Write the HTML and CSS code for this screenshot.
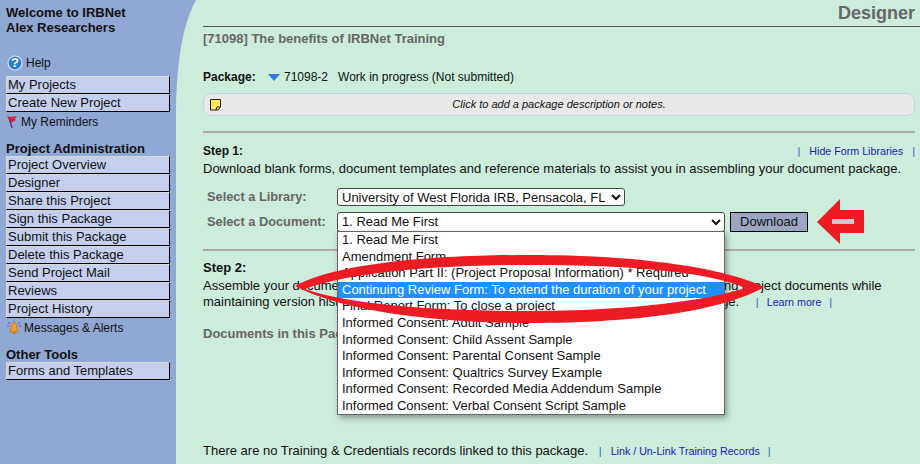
FILE: index.html
```html
<!DOCTYPE html>
<html lang="en">
<head>
<meta charset="utf-8">
<title>IRBNet Designer</title>
<link rel="stylesheet" href="styles.css">
</head>
<body>
<div class="page">
  <aside class="side">
    <div class="welcome">Welcome to IRBNet<br>Alex Researchers</div>
    <div class="help">
      <svg class="ico" width="16" height="16" viewBox="0 0 16 16"><circle cx="8" cy="8" r="7" fill="#2a7fd0" stroke="#d8e8f8" stroke-width="1.2"/><text x="8" y="12" text-anchor="middle" class="qm">?</text></svg>
      <span>Help</span>
    </div>
    <nav class="menu">
      <a>My Projects</a>
      <a>Create New Project</a>
    </nav>
    <div class="sub">
      <svg width="12" height="14" viewBox="0 0 12 14"><path d="M0 1 L4 2 L10 1 L8 3.5 L9 5 L4 8 Z" fill="#d8263c"/><path d="M2 3 L5 13" stroke="#6a2a6a" stroke-width="1.3"/></svg>
      <span>My Reminders</span>
    </div>
    <h3 class="head">Project Administration</h3>
    <nav class="menu">
      <a>Project Overview</a>
      <a>Designer</a>
      <a>Share this Project</a>
      <a>Sign this Package</a>
      <a>Submit this Package</a>
      <a>Delete this Package</a>
      <a>Send Project Mail</a>
      <a>Reviews</a>
      <a>Project History</a>
    </nav>
    <div class="sub alerts">
      <svg width="14" height="14" viewBox="0 0 14 14"><path d="M7 2 C4.6 2 4.2 4 4.2 6.5 C4.2 8.6 3.4 10 2.6 11 H11.4 C10.6 10 9.8 8.6 9.8 6.5 C9.8 4 9.4 2 7 2Z" fill="#f0a020" stroke="#b86c10" stroke-width=".6"/><rect x="5.6" y="11.2" width="2.8" height="1.8" fill="#c87818"/><path d="M1 1 L3 3 M13 1 L11 3 M0 5 H2 M12 5 H14 M7 0 V1" stroke="#6a3ac0" stroke-width=".8"/></svg>
      <span>Messages &amp; Alerts</span>
    </div>
    <h3 class="head other">Other Tools</h3>
    <nav class="menu">
      <a>Forms and Templates</a>
    </nav>
  </aside>

  <svg class="curve" width="24" height="110" viewBox="0 0 24 110"><path d="M0 0 H20 C8 22 1 55 0 110 Z" fill="#90a8d4"/></svg>

  <main class="main">
    <div class="brand">Designer</div>
    <h2 class="title">[71098] The benefits of IRBNet Training</h2>
    <div class="pkg">
      <b class="pkg-label">Package:</b>
      <svg class="tri" width="12" height="7" viewBox="0 0 12 7"><path d="M0 0 H12 L6 7 Z" fill="#3a78d8"/></svg>
      <span class="pkg-id">71098-2</span>
      <span>Work in progress (Not submitted)</span>
    </div>
    <div class="note">
      <svg class="note-ico" width="12" height="12" viewBox="0 0 12 12"><path d="M.5 .5 H10.5 V8 L8 11 H.5 Z" fill="#ffe94a" stroke="#222"/><path d="M6 11 L7 8 H10.5" fill="none" stroke="#222"/></svg>
      <i>Click to add a package description or notes.</i>
    </div>

    <section class="step one">
      <div class="step-top">
        <b>Step 1:</b>
        <div class="links"><s class="bar">|</s><a>Hide Form Libraries</a><s class="bar">|</s></div>
      </div>
      <p class="desc">Download blank forms, document templates and reference materials to assist you in assembling your document package.</p>
      <div class="field lib">
        <label>Select a Library:</label>
        <select class="sel sel-lib"><option>University of West Florida IRB, Pensacola, FL</option></select>
      </div>
      <div class="field doc">
        <label>Select a Document:</label>
        <select class="sel sel-doc"><option>1. Read Me First</option></select>
        <button class="dl">Download</button>
      </div>
    </section>

    <section class="step two">
      <b>Step 2:</b>
      <p class="desc2">Assemble your document package by creating, uploading, sharing, previewing and managing project documents while<br>maintaining version history and tracking all the changes and edits to your document package. <s class="bar lead">|</s><a class="learn">Learn more</a><s class="bar">|</s></p>
      <b class="docs">Documents in this Package:</b>
    </section>

    <div class="train">
      <span>There are no Training &amp; Credentials records linked to this package.</span>
      <s class="bar">|</s><a>Link / Un-Link Training Records</a><s class="bar">|</s>
    </div>
  </main>

  <ul class="list">
    <li>1. Read Me First</li>
    <li>Amendment Form</li>
    <li>Application Part II: (Project Proposal Information) * Required</li>
    <li class="on">Continuing Review Form: To extend the duration of your project</li>
    <li>Final Report Form: To close a project</li>
    <li>Informed Consent: Adult Sample</li>
    <li>Informed Consent: Child Assent Sample</li>
    <li>Informed Consent: Parental Consent Sample</li>
    <li>Informed Consent: Qualtrics Survey Example</li>
    <li>Informed Consent: Recorded Media Addendum Sample</li>
    <li>Informed Consent: Verbal Consent Script Sample</li>
  </ul>

  <svg class="marks" width="920" height="464" viewBox="0 0 920 464">
    <path fill-rule="evenodd" fill="#ed1c24" d="M295 286 C340 262 440 255 530 255 C640 255 725 268 764 287 C725 310 640 323 530 323 C430 323 340 310 295 286 Z M305 289 C350 272 440 265 530 265 C630 265 710 272 745 288 C710 300 630 311 530 311 C440 311 350 305 305 289 Z"/>
    <path d="M817 222 L840 199 V210 H864 V233 H840 V244 Z" fill="#ed1c24"/>
    <rect x="832" y="219" width="22" height="5" fill="#d0c8c8"/>
  </svg>
</div>
</body>
</html>
```
FILE: styles.css
```css
* { box-sizing: border-box; }
html, body { margin: 0; padding: 0; }
body { font-family: "Liberation Sans", Arial, sans-serif; font-size: 13px; color: #111; overflow: hidden; }
.page { position: relative; display: flex; width: 920px; height: 464px; overflow: hidden; background: #ccecdc; }

.side { width: 176px; flex: none; background: #90a8d4; padding: 6px 6px 0 6px; }
.welcome { font-weight: bold; font-size: 13px; line-height: 14.5px; }
.help { display: flex; align-items: center; gap: 3px; margin: 19px 0 0 1px; height: 18px; font-size: 12px; }
.qm { font: bold 13px "Liberation Sans", sans-serif; fill: #fff; }
.menu { display: flex; flex-direction: column; margin-top: 4px; }
.menu a { display: block; height: 18px; line-height: 16px; padding-left: 1px; background: #c4cfee; font-size: 13px; color: #111;
  border-top: 1px solid #d8d8d8; border-left: 1px solid #d8d8d8; border-bottom: 1px solid #000; border-right: 1px solid #000; }
.sub { display: flex; align-items: center; gap: 2px; height: 18px; margin: 1px 0 0 1px; font-size: 12px; }
.head { margin: 10px 0 0; font-size: 13px; line-height: 15px; font-weight: bold; }
.head + .menu { margin-top: 0; }
.alerts { margin-top: 1px; gap: 3px; }
.other { margin-top: 10px; }

.curve { position: absolute; left: 176px; top: 0; }

.main { flex: 1; padding: 0 5px 0 27px; min-width: 0; }
.brand { height: 27px; padding-top: 4px; padding-right: 5px; margin-right: -5px; text-align: right; font-weight: bold; font-size: 18px; line-height: 18px; color: #666; border-bottom: 1px solid #555; }
.title { margin: 4px 0 0; font-size: 13px; line-height: 16px; font-weight: bold; color: #666; }
.pkg { display: flex; align-items: center; height: 16px; margin-top: 22px; font-size: 12px; }
.pkg-label { width: 65px; }
.tri { margin-right: 4px; }
.pkg-id { margin-right: 10px; }
.note { position: relative; height: 23px; margin-top: 8px; background: #e8e8e8; border: 1px solid #c0d4e4; border-radius: 8px; text-align: center; font-size: 11px; line-height: 21px; }
.note-ico { position: absolute; left: 6px; top: 5px; }

.step { border-top: 2px solid #aaa; }
.one { margin-top: 15px; height: 118px; padding-top: 10px; }
.step-top { display: flex; justify-content: space-between; height: 16px; align-items: center; font-size: 12px; }
.links { display: flex; font-size: 10.7px; }
.links a, .train a { color: #1a1ab0; }
.bar { text-decoration: none; color: #2868c0; font-size: 11px; margin: 0 8px; }
.bar.lead { margin-left: 13px; }
.links .bar:first-child { margin-right: 9px; }
.links .bar:last-child { margin: 0 0 0 9px; }
.desc { margin: 2px 0 0; font-size: 13px; line-height: 15px; }
.field { display: flex; align-items: center; }
.field label { width: 134px; padding: 0 0 2px 4px; font-weight: bold; font-size: 12.8px; color: #666; }
.lib { height: 18px; margin-top: 12px; }
.doc { height: 20px; margin-top: 6px; }
.sel { font: 13px "Liberation Sans", sans-serif; color: #111; background: #fff; border: 1px solid #444; border-radius: 3px; padding: 0; }
.sel-lib { width: 288px; height: 18px; }
.sel-doc { width: 388px; height: 20px; padding-bottom: 2px; }
.dl { width: 78px; height: 20px; margin-left: 5px; padding: 0 0 2px; font: 13px "Liberation Sans", sans-serif; color: #111; background: #9aa6c4; border: 1px solid #000; }

.two { padding-top: 9px; font-size: 13px; }
.two > b { display: block; line-height: 15px; font-size: 13px; }
.desc2 { margin: 3px 0 0; line-height: 16px; font-size: 13px; white-space: nowrap; }
.learn { color: #1a1ab0; font-size: 10.7px; }
.two .docs { margin-top: 16px; color: #666; }

.train { position: absolute; left: 203px; top: 443px; font-size: 13px; line-height: 16px; }
.train a { font-size: 10.7px; }
.train .bar { margin: 0 9px 0 7px; }
.train .bar:last-child { margin: 0 0 0 8px; }

.list { position: absolute; left: 337px; top: 231px; width: 388px; height: 184px; margin: 0; padding: 0; list-style: none; background: #fff; border: 1px solid #666; box-shadow: 2px 3px 6px rgba(0,0,0,.35); font-size: 13px; }
.list li { height: 16.6px; line-height: 16.6px; padding-left: 4px; white-space: nowrap; overflow: hidden; color: #111; }
.list .on { background: #1e90ff; color: #fff; }

.marks { position: absolute; left: 0; top: 0; pointer-events: none; }
```
